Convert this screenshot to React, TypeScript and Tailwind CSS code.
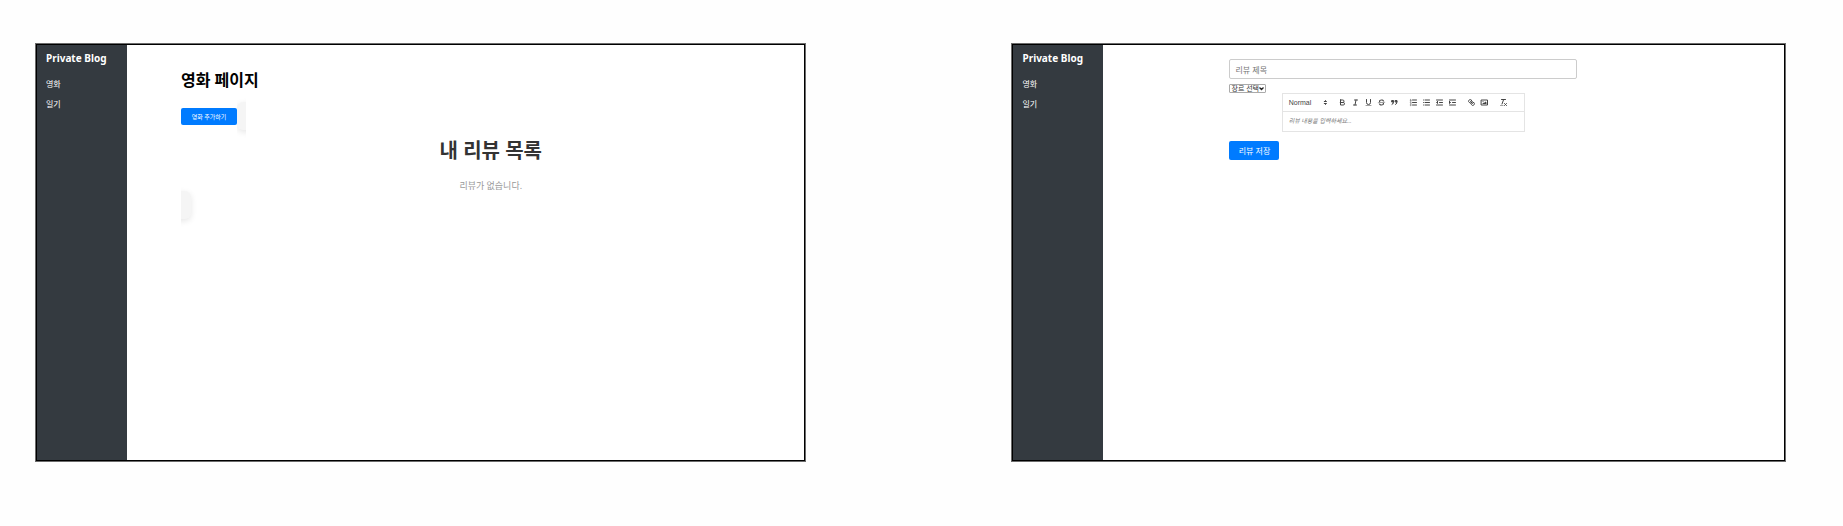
import type { ReactNode } from "react";

const KR = "font-['Noto_Sans','Noto_Sans_CJK_KR',sans-serif]";

function Sidebar() {
  return (
    <nav className="w-[90px] shrink-0 bg-[#343a40] px-[9px] pt-[6px] text-white">
      <h2 className="text-[10px] leading-[14px] font-bold whitespace-nowrap">Private Blog</h2>
      <ul className="mt-[9px] text-[8px] leading-[12px]">
        <li className="py-[4px]">
          <a href="#movies">영화</a>
        </li>
        <li className="py-[4px]">
          <a href="#diary">일기</a>
        </li>
      </ul>
    </nav>
  );
}

function Frame({ children }: { children: ReactNode }) {
  return (
    <section className="flex min-w-0 border border-[#6b6b6b] bg-white">
      <div className="flex min-w-0 flex-1 border border-black">
        <Sidebar />
        {children}
      </div>
    </section>
  );
}

function MoviePage() {
  return (
    <main className="relative min-w-0 flex-1 pt-[24px] pr-[4px] pl-[54px]">
      <h1 className="text-[16px] leading-[22px] font-bold text-black">영화 페이지</h1>
      <button
        type="button"
        className="mt-[17px] block h-[17px] w-[56px] rounded-[2px] bg-[#007bff] text-[6px] leading-[8px] text-white"
      >
        영화 추가하기
      </button>
      <div className="absolute top-[50px] left-[110px] h-[50px] w-[9px] overflow-hidden">
        <div className="mt-[7px] h-[28px] w-[40px] rounded-[6px] bg-[#f5f5f5] shadow-[0_2px_6px_rgba(0,0,0,0.1)]" />
      </div>
      <div className="absolute top-[140px] left-[54px] flex h-[44px] w-[16px] justify-start overflow-hidden">
        <div className="mt-[6px] -ml-[30px] h-[28px] w-[40px] shrink-0 rounded-[6px] bg-[#f5f5f5] shadow-[0_2px_6px_rgba(0,0,0,0.1)]" />
      </div>
      <div className="mt-[12px] text-center">
        <h2 className="text-[20px] leading-[28px] font-bold text-[#333]">내 리뷰 목록</h2>
        <p className="mt-[14px] text-[9px] leading-[14px] text-[#999]">리뷰가 없습니다.</p>
      </div>
    </main>
  );
}

function Tool({ label, children }: { label: string; children: ReactNode }) {
  return (
    <button type="button" aria-label={label} className="flex w-[13px] justify-center">
      <svg
        viewBox="0 0 18 18"
        className="size-[9px]"
        fill="none"
        stroke="#444"
        strokeWidth="2"
        strokeLinecap="round"
        strokeLinejoin="round"
      >
        {children}
      </svg>
    </button>
  );
}

function Toolbar() {
  return (
    <div className="flex h-[19px] items-center gap-[6px] border border-[#e4e4e4] pl-[6px]">
      <button
        type="button"
        className="flex w-[41px] items-center justify-between font-['Liberation_Sans',sans-serif] text-[7px] leading-[10px] text-[#444]"
      >
        Normal
        <svg
          viewBox="0 0 18 18"
          className="size-[9px]"
          fill="#444"
          stroke="#444"
          strokeWidth="2"
          strokeLinecap="round"
          strokeLinejoin="round"
        >
          <polygon points="7 11 9 13 11 11 7 11" />
          <polygon points="7 7 9 5 11 7 7 7" />
        </svg>
      </button>
      <div className="flex">
        <Tool label="Bold">
          <path d="M5,4H9.5A2.5,2.5,0,0,1,12,6.5v0A2.5,2.5,0,0,1,9.5,9H5V4Z" />
          <path d="M5,9h5.5A2.5,2.5,0,0,1,13,11.5v0A2.5,2.5,0,0,1,10.5,14H5V9Z" />
        </Tool>
        <Tool label="Italic">
          <path d="M7 4H13M5 14H11M8 14L10 4" />
        </Tool>
        <Tool label="Underline">
          <path d="M5,3V9a4.012,4.012,0,0,0,4,4H9a4.012,4.012,0,0,0,4-4V3" />
          <rect x="3" y="15" width="12" height="1" rx="0.5" fill="#444" stroke="none" />
        </Tool>
        <Tool label="Strike">
          <path d="M15.5 8.5L2.5 9.5" strokeWidth="1" />
          <g fill="#444" stroke="none">
            <path d="M9.007,8C6.542,7.791,6,7.519,6,6.5,6,5.792,7.283,5,9,5c1.571,0,2.765.679,2.969,1.309a1,1,0,0,0,1.9-.617C13.356,4.106,11.354,3,9,3,6.2,3,4,4.538,4,6.5a3.2,3.2,0,0,0,.5,1.843Z" />
            <path d="M8.984,10C11.457,10.208,12,10.479,12,11.5c0,.708-1.283,1.5-3,1.5-1.571,0-2.765-.679-2.969-1.309a1,1,0,1,0-1.9.617C4.644,13.894,6.646,15,9,15c2.8,0,5-1.538,5-3.5a3.2,3.2,0,0,0-.5-1.843Z" />
          </g>
        </Tool>
        <Tool label="Quote">
          <g fill="#444">
            <rect x="4" y="5" width="3" height="3" />
            <rect x="11" y="5" width="3" height="3" />
            <path d="M7,8c0,4.031-3,5-3,5" />
            <path d="M14,8c0,4.031-3,5-3,5" />
          </g>
        </Tool>
      </div>
      <div className="flex">
        <Tool label="Ordered list">
          <path d="M7 4H15M7 9H15M7 14H15" />
          <path d="M2.5 5.5H4.5M2.6 3L3.5 2.5V5.5" strokeWidth="1" />
          <path d="M4.5,10.5h-2c0-.234,1.85-1.076,1.85-2.234A0.959,0.959,0,0,0,2.5,8.156" strokeWidth="1" />
          <path
            d="M2.5,14.846a0.959,0.959,0,0,0,1.85-.109A0.7,0.7,0,0,0,3.75,14a0.688,0.688,0,0,0,.6-0.736,0.959,0.959,0,0,0-1.85-.109"
            strokeWidth="1"
          />
        </Tool>
        <Tool label="Bullet list">
          <path d="M6 4H15M6 9H15M6 14H15M3 4H3.01M3 9H3.01M3 14H3.01" />
        </Tool>
        <Tool label="Outdent">
          <path d="M3 14H15M3 4H15M9 9H15" />
          <polyline points="5 7 5 11 3 9 5 7" />
        </Tool>
        <Tool label="Indent">
          <path d="M3 14H15M3 4H15M9 9H15" />
          <polyline points="3 7 3 11 5 9 3 7" fill="#444" />
        </Tool>
      </div>
      <div className="flex">
        <Tool label="Link">
          <path d="M7 7L11 11" />
          <path d="M8.9,4.577a3.476,3.476,0,0,1,.36,4.679A3.476,3.476,0,0,1,4.577,8.9C3.185,7.5,2.035,6.4,4.217,4.217S7.5,3.185,8.9,4.577Z" />
          <path d="M13.423,9.1a3.476,3.476,0,0,0-4.679-.36,3.476,3.476,0,0,0,.36,4.679c1.392,1.392,2.5,2.542,4.679.36S14.815,10.5,13.423,9.1Z" />
        </Tool>
        <Tool label="Image">
          <rect x="3" y="4" width="12" height="10" />
          <circle cx="6" cy="7" r="1" fill="#444" stroke="none" />
          <polyline points="5 12 5 11 7 9 8 10 11 7 13 9 13 12 5 12" fill="#444" stroke="none" />
        </Tool>
      </div>
      <Tool label="Clear formatting">
        <path d="M5 3H13M6 12L9.35 3M11 11L15 15M15 11L11 15" />
        <rect x="2" y="14" width="7" height="1" rx="0.5" fill="#444" stroke="none" />
      </Tool>
    </div>
  );
}

function ReviewEditor() {
  return (
    <main className="min-w-0 flex-1 pt-[14px] pl-[126px]">
      <form className="w-[348px] max-w-full">
        <input
          aria-label="리뷰 제목"
          placeholder="리뷰 제목"
          className="block h-[20px] w-full rounded-[2px] border border-[#ccc] px-[5px] text-[8px] leading-[12px] outline-none placeholder:text-[#757575]"
        />
        <div className="relative mt-[5px] w-[37px]">
          <select
            aria-label="장르 선택"
            className="block h-[9px] w-full appearance-none rounded-[1px] border border-[#aaa] pl-px text-[7px] leading-[7px] text-[#333]"
          >
            <option>장르 선택</option>
          </select>
          <svg
            viewBox="0 0 10 10"
            className="pointer-events-none absolute top-[2px] right-[2px] size-[5px]"
            fill="none"
            stroke="#222"
            strokeWidth="2.6"
          >
            <path d="M1 3L5 7L9 3" />
          </svg>
        </div>
        <div className="mx-auto w-[70%]">
          <Toolbar />
          <textarea
            aria-label="리뷰 내용"
            placeholder="리뷰 내용을 입력하세요..."
            rows={1}
            className="block h-[20px] w-full resize-none border border-t-0 border-[#e4e4e4] px-[6px] py-[4px] text-[6px] leading-[10px] italic outline-none placeholder:text-[#777]"
          />
        </div>
        <button
          type="button"
          className="mt-[9px] block h-[19px] w-[50px] rounded-[2px] bg-[#007bff] text-[8px] leading-[12px] text-white"
        >
          리뷰 저장
        </button>
      </form>
    </main>
  );
}

export default function App() {
  return (
    <div
      lang="ko"
      className={`grid min-h-screen grid-cols-[771fr_774fr] gap-[205px] bg-[#fefefe] pt-[43px] pr-[57px] pb-[64px] pl-[35px] ${KR}`}
    >
      <Frame>
        <MoviePage />
      </Frame>
      <Frame>
        <ReviewEditor />
      </Frame>
    </div>
  );
}
